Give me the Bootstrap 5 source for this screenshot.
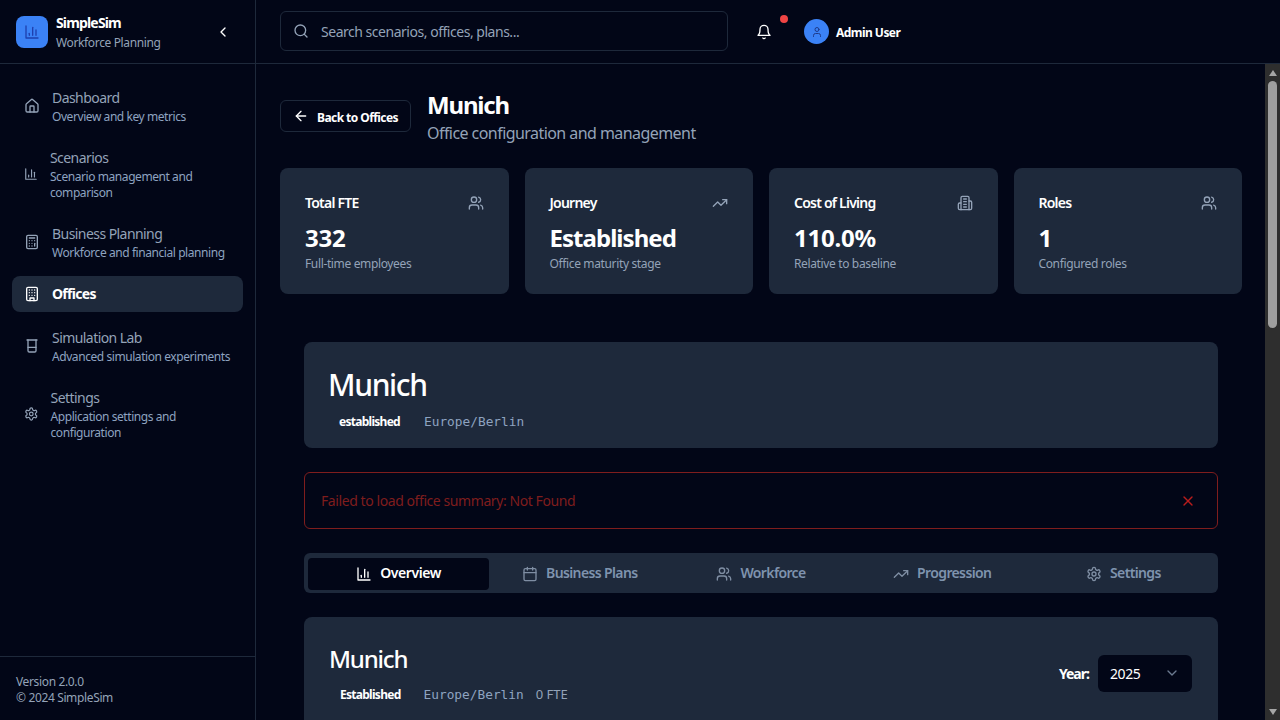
<!DOCTYPE html>
<html lang="en" data-bs-theme="dark">
<head>
<meta charset="utf-8">
<title>Munich - SimpleSim</title>
<link href="https://cdn.jsdelivr.net/npm/bootstrap@5.3.0/dist/css/bootstrap.min.css" rel="stylesheet">
<style>
:root{--pg:#020617;--pn:#1e293b;--mut:#94a3b8;--fnt:"Noto Sans","Open Sans",sans-serif}
*{letter-spacing:-.03em}
html,body{height:100%;margin:0;overflow:hidden;background:var(--pg);color:#fff;font-family:var(--fnt);font-size:14px}
.ic{width:16px;height:16px;fill:none;stroke:currentColor;stroke-width:2;stroke-linecap:round;stroke-linejoin:round;display:block}
.side{width:256px;border-right:1px solid var(--pn);flex:none}
.brandrow{height:64px;border-bottom:1px solid var(--pn);padding:0 24px 0 16px;flex:none}
.logo{width:32px;height:32px;border-radius:8px;background:#3b82f6;color:#1e40af;flex:none}
.brandtx{margin-left:1px}
.bname{font-size:14px;font-weight:700;line-height:20px;margin-top:1px;letter-spacing:-.06em}
.bsub{font-size:12px;line-height:16px;color:var(--mut);margin-top:2px;letter-spacing:-.03em}
.navwrap{padding:16px 12px;gap:8px}
.navit{display:flex;align-items:center;gap:12px;padding:8px 12px;border-radius:8px;color:var(--mut);text-decoration:none}
.navit.on{background:var(--pn);color:#fff;font-weight:700}
.navit.on .navt{letter-spacing:-.05em}
.navt{font-size:14px;line-height:20px;letter-spacing:-.04em}
.navs{font-size:12px;line-height:16px;color:#8ea3c0;margin:1px 0 -1px;letter-spacing:-.036em}
.sfoot{border-top:1px solid var(--pn);padding:17px 16px 14px;font-size:12px;line-height:16px;color:var(--mut);flex:none}
.topb{height:64px;border-bottom:1px solid var(--pn);padding:0 24px;flex:none}
.srch{width:448px;height:40px;border:1px solid var(--pn);border-radius:6px;padding:0 12px;color:var(--mut);gap:12px;margin-top:-1px}
.srch span{font-size:14px;padding-top:1px;letter-spacing:-.034em}
.bellbox{margin-left:28px;width:16px;height:16px}
.reddot{position:absolute;top:-9px;right:-16px;width:8px;height:8px;border-radius:50%;background:#ef4444}
.avat{width:25px;height:25px;border-radius:50%;background:#3b82f6;color:#1e3a8a;margin-left:32px;flex:none}
.avat .ic{width:12px;height:12px}
.uname{font-size:12px;font-weight:700;margin-left:7px;padding-top:2px;letter-spacing:-.045em}
.mainsc{overflow:hidden;padding:24px 23px 24px 24px;min-height:0;min-width:0}
.fakebar{width:15px;flex:none;background:#2e2e2e}
.fbtn{height:17px;flex:none}
.fbtn .tri{width:0;height:0;border-left:4.5px solid transparent;border-right:4.5px solid transparent}
.tri.up{border-bottom:6px solid #a6a6a6}
.tri.dn{border-top:6px solid #a6a6a6}
.fthumb{width:9px;height:247px;background:#9f9f9f;border-radius:5px;margin:0 auto}
.backb{height:32px;border:1px solid var(--pn);border-radius:6px;padding:0 12px;gap:8px;font-size:12px;font-weight:700;color:#fff;background:none;flex:none}
.backb span{padding-top:3px;letter-spacing:-.047em}
.ptitlebox{margin-left:2px}
.ptitle{font-size:24px;line-height:32px;font-weight:700;margin:1px 0 -1px;letter-spacing:-.05em}
.psub{font-size:16px;line-height:24px;color:var(--mut);margin:1px 0 -1px;letter-spacing:-.035em}
.statgrid{display:grid;grid-template-columns:repeat(4,1fr);gap:16px;margin:24px 0 48px}
.stat{background:var(--pn);border-radius:8px;padding:25px 25px 0;height:126px}
.statl{font-size:14px;line-height:20px;font-weight:600;letter-spacing:-.055em}
.stat .ic{color:var(--mut)}
.statv{font-size:24px;line-height:32px;font-weight:700;margin-top:9px;letter-spacing:-.01em}
.statv.tight{letter-spacing:-.04em}
.stats{font-size:12px;line-height:16px;color:var(--mut);margin-top:2px}
.inner{margin:0 24px}
.pan{background:var(--pn);border-radius:8px;padding:25px 25px 15px}
.pant{font-size:30px;line-height:36px;font-weight:500;margin:0 0 0 -1px;letter-spacing:-.045em}
.tagrow{margin-top:8px;height:22px}
.tagx{font-size:12px;font-weight:700;padding:0 10px;color:#fff;line-height:20px;letter-spacing:-.06em}
.mono{font-family:"DejaVu Sans Mono",monospace;font-size:12.8px;color:#8ea3c0;margin-left:14px;letter-spacing:0}
.errb{border:1px solid #7f1d1d;border-radius:6px;height:57px;margin:24px 0;padding:0 16px;color:#7f1d1d}
.errb .x{color:#b91c1c;margin-right:5px}
.tabsb{background:var(--pn);border-radius:6px;height:40px;padding:5px 4px 3px;display:grid;grid-template-columns:repeat(5,1fr);margin-bottom:24px}
.tabi{display:flex;align-items:center;justify-content:center;gap:8px;border-radius:4px;font-size:14px;font-weight:600;color:#7f93ae;line-height:20px;padding-bottom:3px;letter-spacing:-.045em}
.tabi .ic{margin-top:3px}
.tabi.on{background:var(--pg);color:#fff;letter-spacing:-.03em}
.tabi .ic{color:#7f8ea3}
.tabi.on .ic{color:#fff}
.pan2{background:var(--pn);border-radius:8px;padding:26px 26px 0 25px;min-height:1080px}
.pant2{font-size:24px;line-height:32px;font-weight:500;margin:0;letter-spacing:-.05em}
.tagrow.low{padding-top:2px}
.low .tagx{padding-left:11px;padding-right:9px}
.yearwrap{margin-top:-2px}
.yearl{font-size:14px;font-weight:700;margin-right:9px;letter-spacing:-.07em}
.yearbox{width:94px;height:37px;background:var(--pg);border-radius:6px;padding:0 12px;font-size:14px}
.yearbox .ic{color:#6b7a90}
.ftetx{font-size:13px;color:var(--mut);margin-left:12px;letter-spacing:0}
</style>
</head>
<body>
<svg width="0" height="0" class="position-absolute">
<symbol id="i-chart" viewBox="0 0 24 24"><path d="M3 3v18h18"/><path d="M18 17V9"/><path d="M13 17V5"/><path d="M8 17v-3"/></symbol>
<symbol id="i-home" viewBox="0 0 24 24"><path d="M15 21v-8a1 1 0 0 0-1-1h-4a1 1 0 0 0-1 1v8"/><path d="M3 10a2 2 0 0 1 .709-1.528l7-5.999a2 2 0 0 1 2.582 0l7 5.999A2 2 0 0 1 21 10v9a2 2 0 0 1-2 2H5a2 2 0 0 1-2-2z"/></symbol>
<symbol id="i-calc" viewBox="0 0 24 24"><rect x="4" y="2" width="16" height="20" rx="2"/><path d="M8 6h8"/><path d="M16 14v4"/><path d="M16 10h.01M12 10h.01M8 10h.01M12 14h.01M8 14h.01M12 18h.01M8 18h.01"/></symbol>
<symbol id="i-bld" viewBox="0 0 24 24"><rect x="4" y="2" width="16" height="20" rx="2"/><path d="M9 22v-4h6v4"/><path d="M8 6h.01M16 6h.01M12 6h.01M12 10h.01M12 14h.01M16 10h.01M16 14h.01M8 10h.01M8 14h.01"/></symbol>
<symbol id="i-bld2" viewBox="0 0 24 24"><path d="M6 22V4a2 2 0 0 1 2-2h8a2 2 0 0 1 2 2v18Z"/><path d="M6 12H4a2 2 0 0 0-2 2v6a2 2 0 0 0 2 2h2"/><path d="M18 9h2a2 2 0 0 1 2 2v9a2 2 0 0 1-2 2h-2"/><path d="M10 6h4M10 10h4M10 14h4M10 18h4"/></symbol>
<symbol id="i-beak" viewBox="0 0 24 24"><path d="M4.5 3h15"/><path d="M6 3v16a2 2 0 0 0 2 2h8a2 2 0 0 0 2-2V3"/><path d="M6 14h12"/></symbol>
<symbol id="i-gear" viewBox="0 0 24 24"><path d="M12.22 2h-.44a2 2 0 0 0-2 2v.18a2 2 0 0 1-1 1.73l-.43.25a2 2 0 0 1-2 0l-.15-.08a2 2 0 0 0-2.73.73l-.22.38a2 2 0 0 0 .73 2.73l.15.1a2 2 0 0 1 1 1.72v.51a2 2 0 0 1-1 1.74l-.15.09a2 2 0 0 0-.73 2.73l.22.38a2 2 0 0 0 2.73.73l.15-.08a2 2 0 0 1 2 0l.43.25a2 2 0 0 1 1 1.73V20a2 2 0 0 0 2 2h.44a2 2 0 0 0 2-2v-.18a2 2 0 0 1 1-1.73l.43-.25a2 2 0 0 1 2 0l.15.08a2 2 0 0 0 2.73-.73l.22-.39a2 2 0 0 0-.73-2.73l-.15-.08a2 2 0 0 1-1-1.74v-.5a2 2 0 0 1 1-1.74l.15-.09a2 2 0 0 0 .73-2.73l-.22-.38a2 2 0 0 0-2.73-.73l-.15.08a2 2 0 0 1-2 0l-.43-.25a2 2 0 0 1-1-1.73V4a2 2 0 0 0-2-2z"/><circle cx="12" cy="12" r="3"/></symbol>
<symbol id="i-users" viewBox="0 0 24 24"><path d="M16 21v-2a4 4 0 0 0-4-4H6a4 4 0 0 0-4 4v2"/><circle cx="9" cy="7" r="4"/><path d="M22 21v-2a4 4 0 0 0-3-3.87"/><path d="M16 3.13a4 4 0 0 1 0 7.75"/></symbol>
<symbol id="i-trend" viewBox="0 0 24 24"><path d="M22 7 13.5 15.5 8.5 10.5 2 17"/><path d="M16 7h6v6"/></symbol>
<symbol id="i-bell" viewBox="0 0 24 24"><path d="M6 8a6 6 0 0 1 12 0c0 7 3 9 3 9H3s3-2 3-9"/><path d="M10.3 21a1.94 1.94 0 0 0 3.4 0"/></symbol>
<symbol id="i-search" viewBox="0 0 24 24"><circle cx="11" cy="11" r="8"/><path d="m21 21-4.3-4.3"/></symbol>
<symbol id="i-cleft" viewBox="0 0 24 24"><path d="m15 18-6-6 6-6"/></symbol>
<symbol id="i-aleft" viewBox="0 0 24 24"><path d="m12 19-7-7 7-7"/><path d="M19 12H5"/></symbol>
<symbol id="i-user" viewBox="0 0 24 24"><path d="M19 21v-2a4 4 0 0 0-4-4H9a4 4 0 0 0-4 4v2"/><circle cx="12" cy="7" r="4"/></symbol>
<symbol id="i-x" viewBox="0 0 24 24"><path d="M18 6 6 18"/><path d="m6 6 12 12"/></symbol>
<symbol id="i-cal" viewBox="0 0 24 24"><path d="M8 2v4M16 2v4"/><rect x="3" y="4" width="18" height="18" rx="2"/><path d="M3 10h18"/></symbol>
<symbol id="i-cdown" viewBox="0 0 24 24"><path d="m6 9 6 6 6-6"/></symbol>
</svg>

<div class="d-flex vh-100 overflow-hidden">
  <aside class="side d-flex flex-column">
    <div class="brandrow d-flex align-items-center justify-content-between">
      <div class="d-flex align-items-center gap-2">
        <div class="logo d-flex align-items-center justify-content-center"><svg class="ic"><use href="#i-chart"/></svg></div>
        <div class="brandtx"><div class="bname">SimpleSim</div><div class="bsub">Workforce Planning</div></div>
      </div>
      <svg class="ic"><use href="#i-cleft"/></svg>
    </div>
    <nav class="navwrap d-flex flex-column flex-grow-1">
      <a class="navit" href="#"><svg class="ic"><use href="#i-home"/></svg><div><div class="navt">Dashboard</div><div class="navs">Overview and key metrics</div></div></a>
      <a class="navit" href="#"><svg class="ic"><use href="#i-chart"/></svg><div><div class="navt">Scenarios</div><div class="navs">Scenario management and comparison</div></div></a>
      <a class="navit" href="#"><svg class="ic"><use href="#i-calc"/></svg><div><div class="navt">Business Planning</div><div class="navs">Workforce and financial planning</div></div></a>
      <a class="navit on" href="#"><svg class="ic"><use href="#i-bld"/></svg><div><div class="navt">Offices</div></div></a>
      <a class="navit" href="#"><svg class="ic"><use href="#i-beak"/></svg><div><div class="navt">Simulation Lab</div><div class="navs">Advanced simulation experiments</div></div></a>
      <a class="navit" href="#"><svg class="ic"><use href="#i-gear"/></svg><div><div class="navt">Settings</div><div class="navs">Application settings and configuration</div></div></a>
    </nav>
    <div class="sfoot">Version 2.0.0<br>© 2024 SimpleSim</div>
  </aside>

  <div class="d-flex flex-column flex-grow-1" style="min-width:0">
    <header class="topb d-flex align-items-center">
      <div class="srch d-flex align-items-center"><svg class="ic"><use href="#i-search"/></svg><span>Search scenarios, offices, plans...</span></div>
      <div class="bellbox position-relative"><svg class="ic"><use href="#i-bell"/></svg><span class="reddot"></span></div>
      <div class="avat d-flex align-items-center justify-content-center"><svg class="ic"><use href="#i-user"/></svg></div>
      <span class="uname">Admin User</span>
    </header>

    <div class="d-flex flex-grow-1" style="min-height:0">
    <main class="mainsc flex-grow-1">
      <div class="d-flex align-items-center gap-3">
        <button class="backb d-flex align-items-center" type="button"><svg class="ic"><use href="#i-aleft"/></svg><span>Back to Offices</span></button>
        <div class="ptitlebox"><h1 class="ptitle">Munich</h1><p class="psub">Office configuration and management</p></div>
      </div>

      <div class="statgrid">
        <div class="stat"><div class="d-flex justify-content-between align-items-center"><span class="statl">Total FTE</span><svg class="ic"><use href="#i-users"/></svg></div><div class="statv">332</div><div class="stats">Full-time employees</div></div>
        <div class="stat"><div class="d-flex justify-content-between align-items-center"><span class="statl">Journey</span><svg class="ic"><use href="#i-trend"/></svg></div><div class="statv tight">Established</div><div class="stats">Office maturity stage</div></div>
        <div class="stat"><div class="d-flex justify-content-between align-items-center"><span class="statl">Cost of Living</span><svg class="ic"><use href="#i-bld2"/></svg></div><div class="statv">110.0%</div><div class="stats">Relative to baseline</div></div>
        <div class="stat"><div class="d-flex justify-content-between align-items-center"><span class="statl">Roles</span><svg class="ic"><use href="#i-users"/></svg></div><div class="statv">1</div><div class="stats">Configured roles</div></div>
      </div>

      <div class="inner">
        <section class="pan">
          <h2 class="pant">Munich</h2>
          <div class="tagrow d-flex align-items-center"><span class="tagx">established</span><span class="mono">Europe/Berlin</span></div>
        </section>

        <div class="errb d-flex align-items-center justify-content-between"><span>Failed to load office summary: Not Found</span><svg class="ic x"><use href="#i-x"/></svg></div>

        <div class="tabsb">
          <div class="tabi on"><svg class="ic"><use href="#i-chart"/></svg>Overview</div>
          <div class="tabi"><svg class="ic"><use href="#i-cal"/></svg>Business Plans</div>
          <div class="tabi"><svg class="ic"><use href="#i-users"/></svg>Workforce</div>
          <div class="tabi"><svg class="ic"><use href="#i-trend"/></svg>Progression</div>
          <div class="tabi"><svg class="ic"><use href="#i-gear"/></svg>Settings</div>
        </div>

        <section class="pan2">
          <div class="d-flex justify-content-between align-items-center">
            <div>
              <h2 class="pant2">Munich</h2>
              <div class="tagrow low d-flex align-items-center"><span class="tagx">Established</span><span class="mono">Europe/Berlin</span><span class="ftetx">0 FTE</span></div>
            </div>
            <div class="yearwrap d-flex align-items-center"><span class="yearl">Year:</span><div class="yearbox d-flex align-items-center justify-content-between"><span>2025</span><svg class="ic"><use href="#i-cdown"/></svg></div></div>
          </div>
        </section>
      </div>
    </main>
    <div class="fakebar d-flex flex-column" aria-hidden="true">
      <div class="fbtn d-flex align-items-center justify-content-center"><span class="tri up"></span></div>
      <div class="fthumb"></div>
      <div class="flex-grow-1"></div>
      <div class="fbtn d-flex align-items-center justify-content-center"><span class="tri dn"></span></div>
    </div>
    </div>
  </div>
</div>
<script src="https://cdn.jsdelivr.net/npm/bootstrap@5.3.0/dist/js/bootstrap.bundle.min.js"></script>
</body>
</html>
